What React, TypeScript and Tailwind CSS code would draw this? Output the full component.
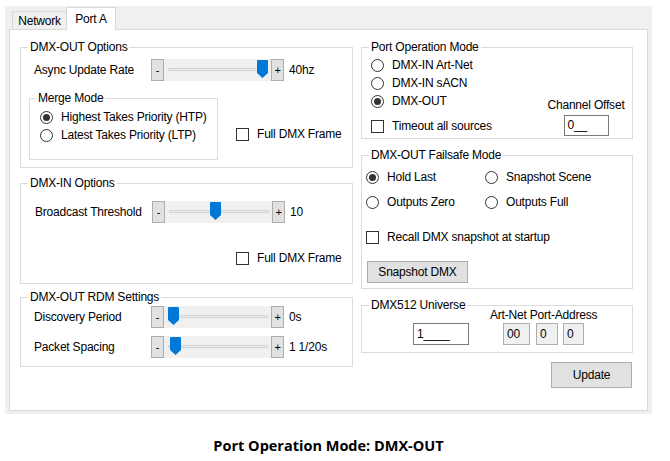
import React from "react";

function Radio({ label, checked }: { label: string; checked?: boolean }) {
  return (
    <div className="flex items-center h-[18px] gap-[8px]">
      <span className="w-[13px] h-[13px] rounded-full border border-[#333] bg-white flex items-center justify-center shrink-0">
        {checked && <span className="w-[7px] h-[7px] rounded-full bg-[#333]" />}
      </span>
      <span className="whitespace-nowrap">{label}</span>
    </div>
  );
}

function Check({ label }: { label: string }) {
  return (
    <div className="flex items-center h-[18px] gap-[8px]">
      <span className="w-[13px] h-[13px] border border-[#333] bg-white shrink-0" />
      <span className="whitespace-nowrap">{label}</span>
    </div>
  );
}

function Group({
  title,
  className,
  legendClass,
  children,
}: {
  title: string;
  className: string;
  legendClass?: string;
  children: React.ReactNode;
}) {
  return (
    <fieldset className={`border border-[#dcdcdc] p-0 m-0 min-w-0 ${className}`}>
      <legend className={`px-[2px] leading-[16px] whitespace-nowrap ${legendClass ?? "ml-[7px]"}`}>{title}</legend>
      {children}
    </fieldset>
  );
}

function Slider({ label, value, thumb, pl = "pl-[13px]" }: { label: string; value: string; thumb: number; pl?: string }) {
  return (
    <div className={`flex items-center h-[22px] ${pl}`}>
      <span className="w-[117px] whitespace-nowrap">{label}</span>
      <div className="flex h-[22px]">
        <div className="w-[13px] h-full bg-[#e1e1e1] border border-[#adadad] flex items-center justify-center text-[11px] leading-none">
          -
        </div>
        <div className="relative w-[107px] h-full bg-[#f0f0f0]">
          <div className="absolute left-[4px] right-[3px] top-[9px] h-[3px] bg-[#e7eaea] border border-[#d6d6d6]" />
          <svg
            className="absolute top-[1px]"
            style={{ left: thumb }}
            width="11"
            height="18"
            viewBox="0 0 11 18"
          >
            <path d="M1 0 H10 Q11 0 11 1 V13 L5.5 18 L0 13 V1 Q0 0 1 0 Z" fill="#0078d7" />
          </svg>
        </div>
        <div className="w-[13px] h-full bg-[#e1e1e1] border border-[#adadad] flex items-center justify-center text-[11px] leading-none">
          +
        </div>
      </div>
      <span className="ml-[5px] whitespace-nowrap">{value}</span>
    </div>
  );
}

export default function App() {
  return (
    <div className="w-[670px] h-[461px] bg-white overflow-hidden font-['Liberation_Sans',Arial,sans-serif] text-[12px] tracking-[-0.2px] text-black leading-[18px]">
      <div className="ml-[5px] mt-[6px] w-[647px] h-[408px] bg-[#f0f0f0] pt-[1px] px-[4px]">
        {/* Tabs */}
        <div className="h-[22px] flex items-end pl-[3px]">
          <div className="w-[55px] h-[18px] border border-b-0 border-[#d9d9d9] bg-[#f0f0f0] flex items-center justify-center">
            Network
          </div>
          <div className="relative z-10 -ml-px -mb-px w-[50px] h-[23px] border border-b-0 border-[#d9d9d9] bg-white flex items-center justify-center">
            Port A
          </div>
        </div>
        {/* Panel */}
        <div className="h-[382px] border border-[#d9d9d9] bg-white pt-[9px] pl-[10px] flex gap-[8px]">
          {/* Left column */}
          <div className="w-[333px] flex flex-col">
            <Group title="DMX-OUT Options" className="h-[129px]">
              <div className="mt-[4px]">
                <Slider label="Async Update Rate" value="40hz" thumb={93} />
              </div>
              <div className="flex mt-[9px]">
                <Group title="Merge Mode" className="ml-[8px] w-[189px] h-[70px]" legendClass="ml-[6px]">
                  <div className="mt-[2px] pl-[10px]">
                    <Radio label="Highest Takes Priority (HTP)" checked />
                    <Radio label="Latest Takes Priority (LTP)" />
                  </div>
                </Group>
                <div className="ml-[18px] mt-[35px]">
                  <Check label="Full DMX Frame" />
                </div>
              </div>
            </Group>
            <Group title="DMX-IN Options" className="h-[109px] mt-[7px]">
              <div className="mt-[10px]">
                <Slider label="Broadcast Threshold" value="10" thumb={45} pl="pl-[14px]" />
              </div>
              <div className="mt-[26px] pl-[215px]">
                <Check label="Full DMX Frame" />
              </div>
            </Group>
            <Group title="DMX-OUT RDM Settings" className="h-[78px] mt-[5px]">
              <div className="mt-[1px]">
                <Slider label="Discovery Period" value="0s" thumb={4} />
              </div>
              <div className="mt-[8px]">
                <Slider label="Packet Spacing" value="1 1/20s" thumb={6} />
              </div>
            </Group>
          </div>
          {/* Right column */}
          <div className="w-[272px] flex flex-col">
            <Group title="Port Operation Mode" className="h-[100px]">
              <div className="flex">
                <div className="mt-[1px] pl-[9px]">
                  <Radio label="DMX-IN Art-Net" />
                  <Radio label="DMX-IN sACN" />
                  <Radio label="DMX-OUT" checked />
                  <div className="mt-[7px]">
                    <Check label="Timeout all sources" />
                  </div>
                </div>
                <div className="ml-auto mr-[1px] w-[90px] mt-[42px] flex flex-col items-center">
                  <span className="leading-[16px] whitespace-nowrap">Channel Offset</span>
                  <div className="mt-[2px] w-[45px] h-[21px] border border-[#7a7a7a] bg-white pl-[3px] leading-[19px]">
                    0__
                  </div>
                </div>
              </div>
            </Group>
            <Group title="DMX-OUT Failsafe Mode" className="h-[142px] mt-[8px]">
              <div className="mt-[5px] pl-[4px] grid grid-cols-[119px_1fr] gap-y-[7px]">
                <Radio label="Hold Last" checked />
                <Radio label="Snapshot Scene" />
                <Radio label="Outputs Zero" />
                <Radio label="Outputs Full" />
              </div>
              <div className="mt-[17px] pl-[4px]">
                <Check label="Recall DMX snapshot at startup" />
              </div>
              <div className="mt-[15px] ml-[5px] w-[101px] h-[22px] bg-[#e1e1e1] border border-[#adadad] flex items-center justify-center">
                Snapshot DMX
              </div>
            </Group>
            <Group title="DMX512 Universe" className="h-[56px] mt-[8px]">
              <div className="-mt-[6px] flex">
                <div className="ml-[51px] mt-[16px] w-[56px] h-[22px] border border-[#7a7a7a] bg-white pl-[3px] leading-[20px]">
                  1____
                </div>
                <div className="ml-[21px] flex flex-col">
                  <span className="leading-[16px] whitespace-nowrap">Art-Net Port-Address</span>
                  <div className="flex ml-[13px]">
                    <div className="w-[27px] h-[22px] border border-[#adadad] bg-[#f0f0f0] pl-[3px] leading-[20px]">00</div>
                    <div className="ml-[6px] w-[22px] h-[22px] border border-[#adadad] bg-[#f0f0f0] pl-[3px] leading-[20px]">0</div>
                    <div className="ml-[5px] w-[21px] h-[22px] border border-[#adadad] bg-[#f0f0f0] pl-[3px] leading-[20px]">0</div>
                  </div>
                </div>
              </div>
            </Group>
            <div className="mt-[9px] self-end mr-[1px] w-[81px] h-[26px] bg-[#e1e1e1] border border-[#adadad] flex items-center justify-center">
              Update
            </div>
          </div>
        </div>
      </div>
      <div className="ml-[5px] w-[647px] mt-[22px] text-center font-['Open_Sans',sans-serif] font-bold text-[14.5px] leading-[20px] tracking-normal">
        Port Operation Mode: DMX-OUT
      </div>
    </div>
  );
}
